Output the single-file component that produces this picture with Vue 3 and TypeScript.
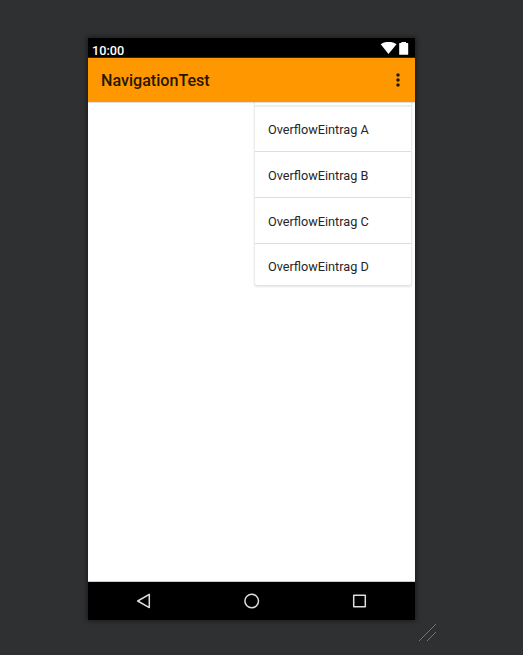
<script setup lang="ts">
interface MenuEntry {
  id: string
  label: string
}

const title = 'NavigationTest'
const clock = '10:00'
const entries: MenuEntry[] = ['A', 'B', 'C', 'D'].map((id) => ({
  id,
  label: `OverflowEintrag ${id}`,
}))
</script>

<template>
  <main class="workspace">
    <section class="phone">
      <header class="status-bar">
        <span class="clock">{{ clock }}</span>
        <svg class="status-icons" width="30" height="14" viewBox="0 0 30 14">
          <path d="M0.700 2.200C5.400-1 11.800-1 16.500 2.200L8.500 12Z" fill="#fff" />
          <path d="M21.400 0h4.600v1h1.600q.6 0 .6.6v10.600q0 .6-.6.6h-7.800q-.6 0-.6-.6V1.600q0-.6.6-.6h1.600z" fill="#fff" />
        </svg>
      </header>
      <div class="app-bar">
        <h1 class="title">{{ title }}</h1>
        <button class="more" aria-label="Menu">
          <svg width="6" height="16" viewBox="0 0 6 16" fill="#261700">
            <circle cx="3" cy="3.100" r="1.750" />
            <circle cx="3" cy="8" r="1.750" />
            <circle cx="3" cy="12.900" r="1.750" />
          </svg>
        </button>
      </div>
      <div class="content">
        <ul class="menu">
          <li v-for="entry in entries" :key="entry.id" class="entry">{{ entry.label }}</li>
        </ul>
      </div>
      <nav class="nav-bar">
        <svg width="16" height="18" viewBox="0 0 16 18"><path d="M13.300 2.400v13.200L1.700 9z" /></svg>
        <svg width="18" height="18" viewBox="0 0 18 18"><circle cx="8.700" cy="9" r="6.800" /></svg>
        <svg width="16" height="18" viewBox="0 0 16 18"><rect x="2.700" y="3.200" width="11.600" height="11.600" /></svg>
      </nav>
    </section>
    <svg class="resize" width="18" height="18" viewBox="0 0 18 18">
      <path d="M0 17L17 0M8 17L17 8" />
    </svg>
  </main>
</template>

<style>
body {
  margin: 0;
  background: #2f3032;
}
</style>

<style scoped>
.workspace {
  box-sizing: border-box;
  height: 655px;
  padding: 38px 0 0 88px;
  background: #2f3032;
  font-family: Roboto, sans-serif;
  overflow: hidden;
}
.phone {
  display: flex;
  flex-direction: column;
  width: 327px;
  height: 582px;
  background: #fff;
  box-shadow: 0 0 5px 1px rgba(0, 0, 0, 0.45);
}
.status-bar {
  box-sizing: border-box;
  display: flex;
  justify-content: space-between;
  height: 20px;
  padding: 4px 5px 0 4px;
  background: #000;
  border-bottom: 1px solid #3a2503;
}
.clock {
  color: #fff;
  font-size: 12.7px;
  font-weight: 500;
  line-height: 17px;
}
.status-icons {
  display: block;
}
.app-bar {
  box-sizing: border-box;
  display: flex;
  align-items: center;
  justify-content: space-between;
  height: 44px;
  padding: 0 14.500px 0 13px;
  background: #ff9800;
}
.title {
  margin: 0;
  padding-top: 2px;
  color: #261700;
  font-size: 16.100px;
  font-weight: 500;
  line-height: 20px;
}
.more {
  display: flex;
  padding: 0;
  border: 0;
  background: none;
}
.content {
  box-sizing: border-box;
  display: flex;
  justify-content: flex-end;
  align-items: flex-start;
  height: 480px;
  padding-right: 4px;
  overflow: hidden;
  border-bottom: 1px solid #ccc;
  box-shadow: inset 0 1px 1px #ddd;
}
.menu {
  width: 156px;
  margin: 0;
  padding: 3px 0 0;
  list-style: none;
  border-radius: 0 0 2px 2px;
  box-shadow: 0 1px 2px 1px rgba(0, 0, 0, 0.11);
}
.entry {
  box-sizing: border-box;
  height: 46px;
  padding-left: 13px;
  border-top: 1px solid #dedede;
  color: #262626;
  font-size: 12.700px;
  line-height: 47px;
}
.entry:first-child {
  border-top: 2px solid #eee;
  line-height: 45px;
}
.entry:last-child {
  height: 42px;
  line-height: 46px;
}
.nav-bar {
  display: flex;
  align-items: center;
  justify-content: space-between;
  height: 38px;
  padding: 0 48px;
  background: #000;
}
.nav-bar path,
.nav-bar circle,
.nav-bar rect {
  fill: none;
  stroke: #ddd;
  stroke-width: 1.5;
  stroke-linejoin: round;
}
.resize {
  display: block;
  margin: 4px 0 0 331px;
  fill: none;
  stroke: #858687;
  stroke-width: 0.8;
}
</style>
